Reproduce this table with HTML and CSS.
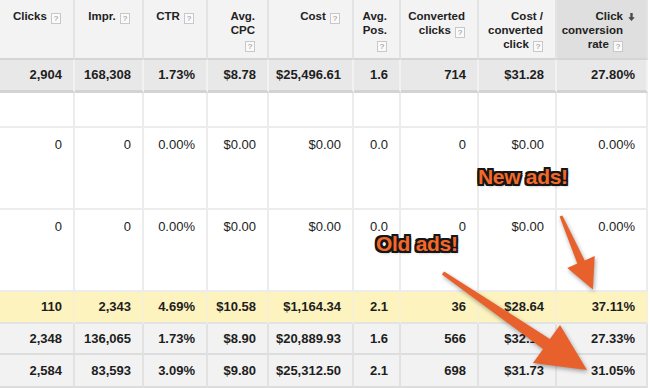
FILE: index.html
```html
<!DOCTYPE html>
<html>
<head>
<meta charset="utf-8">
<link rel="stylesheet" href="styles.css">
</head>
<body>
<div class="report">
  <table class="grid">
    <colgroup>
      <col class="w1"><col class="w2"><col class="w3"><col class="w4"><col class="w5"><col class="w6"><col class="w7"><col class="w8"><col class="w9">
    </colgroup>
    <thead>
      <tr class="head">
        <th>Clicks <span class="help">?</span></th>
        <th>Impr. <span class="help">?</span></th>
        <th>CTR <span class="help">?</span></th>
        <th>Avg.<br>CPC<br><span class="help">?</span></th>
        <th>Cost <span class="help">?</span></th>
        <th>Avg.<br>Pos.<br><span class="help">?</span></th>
        <th>Converted<br>clicks <span class="help">?</span></th>
        <th>Cost /<br>converted<br>click <span class="help">?</span></th>
        <th class="sorted">
          <div class="sort-wrap">
            <div>Click<br>conversion<br>rate <span class="help">?</span></div>
            <svg class="sort-icon" width="7" height="8" viewBox="0 0 7 8"><path d="M2.3 0h2.4v4.2h2.1L3.5 8 0.2 4.2h2.1z" fill="#4a4a4a"/></svg>
          </div>
        </th>
      </tr>
    </thead>
    <tbody>
      <tr class="total">
        <td>2,904</td><td>168,308</td><td>1.73%</td><td>$8.78</td><td>$25,496.61</td><td>1.6</td><td>714</td><td>$31.28</td><td>27.80%</td>
      </tr>
      <tr class="blank">
        <td></td><td></td><td></td><td></td><td></td><td></td><td></td><td></td><td></td>
      </tr>
      <tr class="zero">
        <td>0</td><td>0</td><td>0.00%</td><td>$0.00</td><td>$0.00</td><td>0.0</td><td>0</td><td>$0.00</td><td>0.00%</td>
      </tr>
      <tr class="zero">
        <td>0</td><td>0</td><td>0.00%</td><td>$0.00</td><td>$0.00</td><td>0.0</td><td>0</td><td>$0.00</td><td>0.00%</td>
      </tr>
      <tr class="hl">
        <td>110</td><td>2,343</td><td>4.69%</td><td>$10.58</td><td>$1,164.34</td><td>2.1</td><td>36</td><td>$28.64</td><td>37.11%</td>
      </tr>
      <tr class="alt">
        <td>2,348</td><td>136,065</td><td>1.73%</td><td>$8.90</td><td>$20,889.93</td><td>1.6</td><td>566</td><td>$32.12</td><td>27.33%</td>
      </tr>
      <tr class="alt last">
        <td>2,584</td><td>83,593</td><td>3.09%</td><td>$9.80</td><td>$25,312.50</td><td>2.1</td><td>698</td><td>$31.73</td><td>31.05%</td>
      </tr>
    </tbody>
  </table>

  <div class="note note-new">New ads!</div>
  <div class="note note-old">Old ads!</div>

  <svg class="arrows" width="650" height="388" viewBox="0 0 650 388">
    <polygon points="559.6,216.6 562.4,215.4 584.7,260.4 594.7,256 592.9,289.5 567.3,268 577.3,263.6" fill="#e8612d"/>
    <polygon points="441.9,274.6 444.1,271.4 549.9,339 560,325 587,370 533,363 543.1,349" fill="#e8612d"/>
  </svg>
</div>
</body>
</html>
```

FILE: styles.css
```css
html, body {
  margin: 0;
  padding: 0;
  background: #ffffff;
}

.report {
  position: relative;
  width: 650px;
  height: 388px;
  overflow: hidden;
}

.grid {
  border-collapse: separate;
  border-spacing: 0;
  table-layout: fixed;
  width: 648px;
  font-family: "Liberation Sans", Arial, sans-serif;
  color: #1e1e1e;
}

.w1 { width: 75px; }
.w2 { width: 69px; }
.w3 { width: 64px; }
.w4 { width: 61px; }
.w5 { width: 85px; }
.w6 { width: 47px; }
.w7 { width: 78px; }
.w8 { width: 78px; }
.w9 { width: 91px; }

.grid th,
.grid td {
  box-sizing: border-box;
  text-align: right;
  white-space: nowrap;
  border-right: 2px solid #ececec;
  border-bottom: 2px solid #ececec;
}

/* header */
.head { height: 60px; }

.grid th {
  vertical-align: top;
  padding: 9px 12px 0 2px;
  font-size: 11.5px;
  line-height: 14px;
  font-weight: bold;
  color: #222;
  background: #f3f3f3;
  border-right-color: #e3e3e3;
  border-bottom-color: #d5d5d5;
}

.grid th.sorted {
  background: #dfdfdf;
  padding-right: 11px;
}

.sort-wrap {
  display: flex;
  justify-content: flex-end;
  align-items: flex-start;
  gap: 5px;
}

.sort-icon {
  margin-top: 4px;
}

.help {
  display: inline-block;
  box-sizing: border-box;
  width: 10px;
  height: 11px;
  margin-left: 1px;
  border: 1px solid #c8c8c8;
  background: #fafafa;
  color: #8a8a8a;
  font-size: 8px;
  line-height: 9px;
  font-weight: normal;
  text-align: center;
  vertical-align: -1px;
}

/* body cells */
.grid td {
  font-size: 13px;
  line-height: 16px;
  padding: 0 11px 0 2px;
}

.total { height: 33px; }
.total td {
  font-weight: bold;
  vertical-align: middle;
  background: #e8e8e8;
  border-right-color: #f2f2f2;
  border-bottom: 3px solid #d3d3d3;
}

.blank { height: 35px; }

.zero { height: 82px; }
.zero td {
  vertical-align: top;
  padding-top: 9px;
  color: #222;
}

.hl { height: 32px; }
.hl td {
  font-weight: bold;
  vertical-align: middle;
  background: #fdf3bf;
  border-right-color: #f8f0d2;
  border-bottom-color: #e3e3e3;
}

.alt { height: 31px; }
.alt.last { height: 33px; }
.alt td {
  font-weight: bold;
  vertical-align: middle;
  background: #f2f2f2;
  border-right-color: #e2e2e2;
  border-bottom-color: #dddddd;
}

/* annotations */
.note {
  position: absolute;
  font-family: "Liberation Sans", Arial, sans-serif;
  font-weight: bold;
  font-size: 21px;
  line-height: 20px;
  letter-spacing: -0.3px;
  color: #f4682a;
  white-space: nowrap;
  text-shadow:
    -2px -2px 0 #161616,
    2px -2px 0 #161616,
    -2px 2px 0 #161616,
    2px 2px 0 #161616,
    0 -2px 0 #161616,
    0 2px 0 #161616,
    -2px 0 0 #161616,
    2px 0 0 #161616,
    1px 2px 3px rgba(0, 0, 0, 0.45);
}

.note-new { left: 478px; top: 167px; }
.note-old { left: 376px; top: 234px; }

.arrows {
  position: absolute;
  left: 0;
  top: 0;
  filter: drop-shadow(1px 2px 2px rgba(0, 0, 0, 0.35));
  pointer-events: none;
}
```
